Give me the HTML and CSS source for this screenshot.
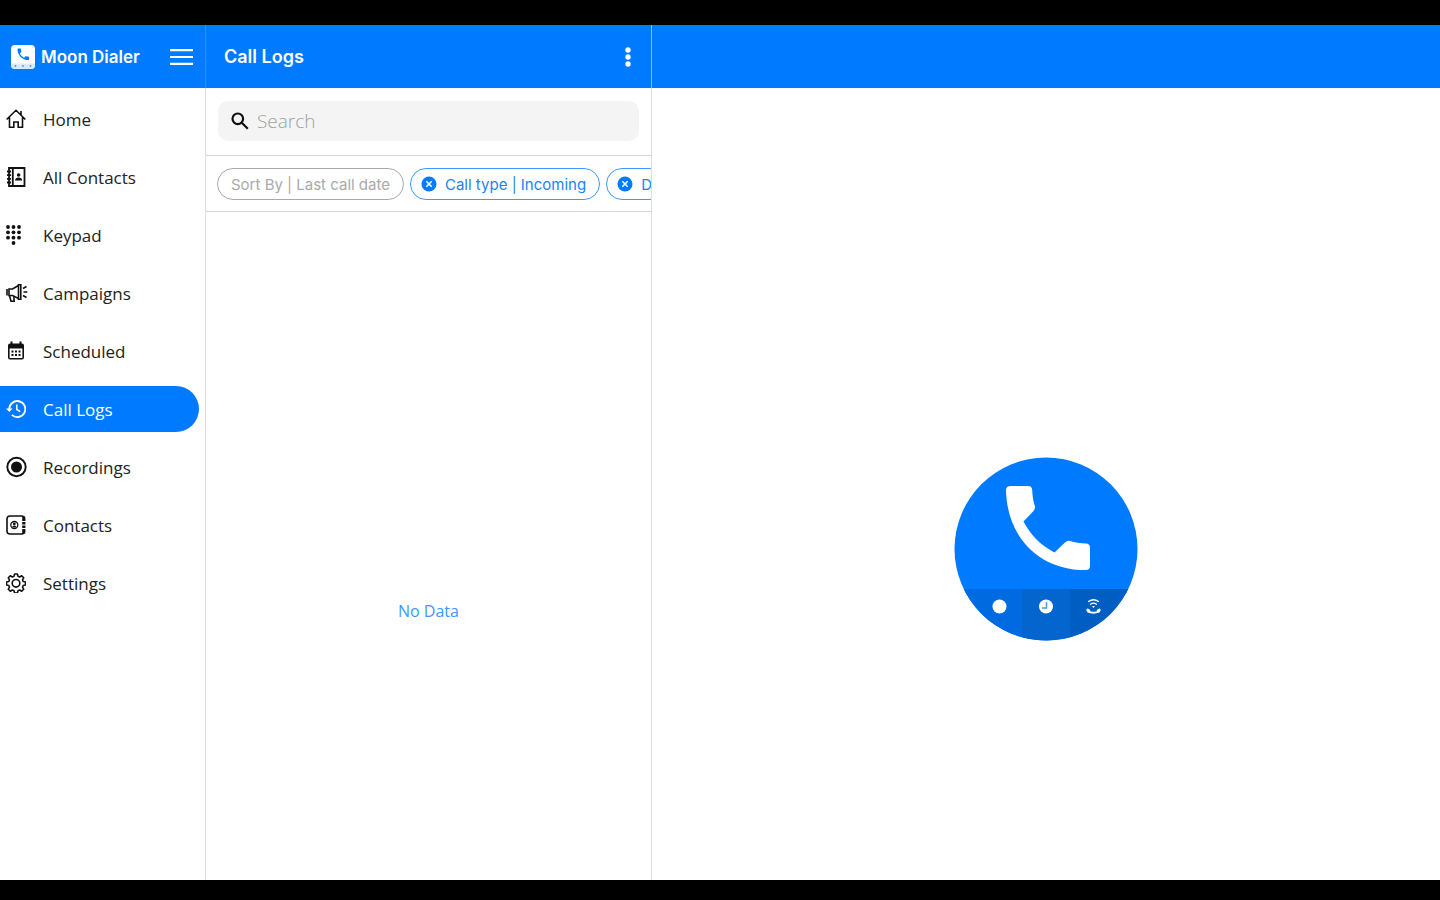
FILE: index.html
```html
<!doctype html>
<html lang="en">
<head>
    <meta charset="UTF-8">
    <meta name="viewport" content="width=device-width, initial-scale=1.0">
    <title>Moon Dialer</title>
    <link rel="stylesheet" href="styles.css">
</head>
<body>
<div class="app">
    <aside class="sidebar">
        <header class="bar brand">
            <svg class="brand-logo" viewBox="0 0 24 24">
                <rect width="24" height="24" rx="4" fill="#fff"/>
                <path d="M0 18.500h24V20a4 4 0 0 1-4 4H4a4 4 0 0 1-4-4z" fill="#d9eaff"/>
                <path transform="translate(4.6 1.6) scale(.64)" d="M6.62 10.79c1.44 2.83 3.76 5.14 6.59 6.59l2.2-2.2c.27-.27.67-.36 1.02-.24 1.12.37 2.33.57 3.57.57.55 0 1 .45 1 1V20c0 .55-.45 1-1 1C10.61 21 3 13.39 3 4c0-.55.45-1 1-1h3.5c.55 0 1 .45 1 1 0 1.25.2 2.45.57 3.57.11.35.03.74-.25 1.02z" fill="#007aff"/>
                <circle cx="4.500" cy="21" r=".9" fill="#3d98ff"/>
                <circle cx="12" cy="21" r=".9" fill="#3d98ff"/>
                <circle cx="19.500" cy="21" r=".9" fill="#3d98ff"/>
            </svg>
            <h1 class="brand-name">Moon Dialer</h1>
            <button class="icon-btn" type="button" aria-label="Menu">
                <svg width="23" height="16" viewBox="0 0 23 16" stroke="#fff" stroke-width="2.2">
                    <path d="M0 1.200h23M0 8h23M0 14.800h23"/>
                </svg>
            </button>
        </header>
        <nav class="nav">
            <a href="#home" class="nav-item">
                <svg class="nav-icon" viewBox="0 0 20 20" fill="none" stroke="currentColor" stroke-width="1.6">
                    <path d="M.6 10.500 10 1.300l9.400 9.200M15 6V2M3.500 8.500v9.700h4.300V13h4.400v5.200h4.300V8.500"/>
                </svg>
                Home
            </a>
            <a href="#all-contacts" class="nav-item">
                <svg class="nav-icon" viewBox="0 0 20 20" fill="none" stroke="currentColor" stroke-width="1.8">
                    <path d="M3 1h15.500v18H3zM6.800 1v18"/>
                    <path d="M1 4.500h4M1 8.200h4M1 11.800h4M1 15.500h4"/>
                    <circle cx="12.600" cy="8" r="1.800" fill="currentColor" stroke="none"/>
                    <path d="M9 13.500c0-4 7.200-4 7.200 0z" fill="currentColor" stroke="none"/>
                </svg>
                All Contacts
            </a>
            <a href="#keypad" class="nav-item">
                <svg class="nav-icon" viewBox="0 0 20 20" fill="currentColor">
                    <circle cx="2" cy="2" r="1.900"/><circle cx="7.500" cy="2" r="1.900"/><circle cx="13" cy="2" r="1.900"/>
                    <circle cx="2" cy="7.300" r="1.900"/><circle cx="7.500" cy="7.300" r="1.900"/><circle cx="13" cy="7.300" r="1.900"/>
                    <circle cx="2" cy="12.700" r="1.900"/><circle cx="7.500" cy="12.700" r="1.900"/><circle cx="13" cy="12.700" r="1.900"/>
                    <circle cx="7.500" cy="18" r="1.900"/>
                </svg>
                Keypad
            </a>
            <a href="#campaigns" class="nav-item">
                <svg class="nav-icon" viewBox="0 0 20 20" fill="none" stroke="currentColor" stroke-width="1.6" overflow="visible">
                    <path d="M1 6v6.500M3 6v6.500h3.500l6 3V2.500L6.500 6z"/>
                    <path d="M12.500 2.500V1.700h2.300v14.600h-2.300v-.8M3.500 12.500 5 18.300h3.200l-.4-4.800"/>
                    <path d="M17 5.500 20.500 3.500M17.500 9h3.800M17 12.500l3.500 2"/>
                </svg>
                Campaigns
            </a>
            <a href="#scheduled" class="nav-item">
                <svg class="nav-icon" viewBox="0 0 20 20">
                    <path d="M4 2.500h12a2 2 0 0 1 2 2v12a2 2 0 0 1-2 2H4a2 2 0 0 1-2-2v-12a2 2 0 0 1 2-2z" fill="currentColor"/>
                    <path d="M5.500.5v4M14.500.5v4" stroke="currentColor" stroke-width="2"/>
                    <path d="M3.600 7.500h12.800V17H3.600z" fill="#fff"/>
                    <path d="M5.500 10.500h9M5.500 14h9" stroke="currentColor" stroke-width="2" stroke-dasharray="2 1.500"/>
                </svg>
                Scheduled
            </a>
            <a href="#call-logs" class="nav-item active">
                <svg class="nav-icon" viewBox="0 0 20 20" fill="none" stroke="currentColor" stroke-width="1.9">
                    <path d="M3.300 10.500A8 8 0 1 1 5.800 15.900"/>
                    <path d="M0 9.500h6.600l-3.300 3.600z" fill="currentColor" stroke="none"/>
                    <path d="M10.800 5.500v5l3.500 2.200" stroke-width="1.500"/>
                </svg>
                Call Logs
            </a>
            <a href="#recordings" class="nav-item">
                <svg class="nav-icon" viewBox="0 0 20 20" overflow="visible">
                    <circle cx="10.500" cy="10" r="9.200" fill="none" stroke="currentColor" stroke-width="1.900"/>
                    <circle cx="10.500" cy="10" r="5.500" fill="currentColor"/>
                </svg>
                Recordings
            </a>
            <a href="#contacts" class="nav-item">
                <svg class="nav-icon" viewBox="0 0 20 20" fill="none" stroke="currentColor" stroke-width="1.6">
                    <rect x="1" y="1" width="17.500" height="18" rx="3"/>
                    <path d="M17.700 1.500v17" stroke-width="3"/>
                    <path d="M16 6.500h4M16 10h4M16 13.500h4" stroke="#fff" stroke-width="1"/>
                    <circle cx="8.300" cy="10" r="3.500" stroke-width="1.300"/>
                    <circle cx="8.300" cy="9" r="1.400" fill="currentColor" stroke="none"/>
                    <path d="M6 12.500c0-2.500 4.600-2.500 4.600 0z" fill="currentColor" stroke="none"/>
                </svg>
                Contacts
            </a>
            <a href="#settings" class="nav-item">
                <svg class="nav-icon" viewBox="0 0 20 20" fill="none" stroke="currentColor" stroke-width="1.6" stroke-linejoin="round">
                    <path d="M8.600 1h2.800l.6 2.300 1.700.7 2-1.200 2 2-1.200 2 .7 1.700 2.300.6v2.800l-2.300.6-.7 1.700 1.200 2-2 2-2-1.200-1.700.7-.6 2.300H8.600L8 17.700 6.300 17l-2 1.200-2-2 1.200-2-.7-1.700-2.300-.6V9.100l2.300-.6.7-1.700-1.200-2 2-2 2 1.200L8 3.300z"/>
                    <circle cx="10" cy="10.300" r="3.800"/>
                </svg>
                Settings
            </a>
        </nav>
    </aside>

    <section class="logs">
        <header class="bar logs-bar">
            <h2 class="bar-title">Call Logs</h2>
            <button class="icon-btn" type="button" aria-label="More options">
                <svg width="6" height="20" viewBox="0 0 6 20" fill="#fff">
                    <circle cx="3" cy="3" r="2.700"/>
                    <circle cx="3" cy="10" r="2.700"/>
                    <circle cx="3" cy="17" r="2.700"/>
                </svg>
            </button>
        </header>
        <div class="search-row">
            <label class="search">
                <svg width="18" height="18" viewBox="0 0 18 18" fill="none" stroke="#111" stroke-width="2.2">
                    <circle cx="6.800" cy="6.800" r="5.300"/>
                    <path d="M10.500 10.500l6.300 6.300"/>
                </svg>
                <input class="search-input" type="search" placeholder="Search" aria-label="Search">
            </label>
        </div>
        <div class="chips">
            <button class="chip chip-sort" type="button">Sort By | Last call date</button>
            <button class="chip chip-filter" type="button">
                <svg class="chip-x" viewBox="0 0 16 16">
                    <circle cx="8" cy="8" r="7.500" fill="#007aff"/>
                    <path d="M5.300 5.300l5.400 5.400M10.700 5.300l-5.400 5.400" stroke="#fff" stroke-width="1.500"/>
                </svg>
                Call type | Incoming
            </button>
            <button class="chip chip-filter" type="button">
                <svg class="chip-x" viewBox="0 0 16 16">
                    <circle cx="8" cy="8" r="7.500" fill="#007aff"/>
                    <path d="M5.300 5.300l5.400 5.400M10.700 5.300l-5.400 5.400" stroke="#fff" stroke-width="1.500"/>
                </svg>
                D
            </button>
        </div>
        <div class="empty">No Data</div>
    </section>

    <main class="detail">
        <div class="bar"></div>
        <div class="empty">
            <svg class="logo" viewBox="0 0 184 184">
                <clipPath id="disc"><circle cx="92" cy="92" r="91.500"/></clipPath>
                <g clip-path="url(#disc)">
                    <path fill="#007aff" d="M0 0h184v184H0z"/>
                    <path fill="#006be0" d="M0 132h68v52H0z"/>
                    <path fill="#0565cf" d="M68 132h48v52H68z"/>
                    <path fill="#005dc2" d="M116 132h68v52h-68z"/>
                </g>
                <path fill="#fff" d="M57 29h17q4 0 4.200 4c.3 6.500 1 11 2.500 15.500q1 3-1.200 5.500L69.500 64.500c8 14.500 17 23.500 31 31l10.500-10q2-2.200 5-1.500c5 1.500 10 2.200 16 2.500q4 .2 4 4.200v18.300q0 4-4 4C86 113.500 53 81 52 33q0-4 5-4z"/>
                <circle cx="45.500" cy="149.500" r="7" fill="#fff"/>
                <circle cx="92" cy="149.500" r="7" fill="#fff"/>
                <path d="M92.500 145v6h-4.500" fill="none" stroke="#4d9bed" stroke-width="1.500"/>
                <g fill="none" stroke="#fff" stroke-linecap="round">
                    <path d="M134.500 144.500q5-3.500 10 0M136.500 147.200q3-2 6 0" stroke-width="1.300"/>
                    <path d="M134 154.500q5.500 2.500 11 0" stroke-width="1.800"/>
                    <path d="M133.800 153.200l1 .8M145.200 153.200l-1 .8" stroke-width="3"/>
                </g>
                <path d="M138 149h3l-1.500 2z" fill="#fff"/>
            </svg>
        </div>
    </main>
</div>
</body>
</html>
```

FILE: styles.css
```css
* {
    box-sizing: border-box;
}

html, body {
    margin: 0;
    padding: 0;
}

body {
    background: #000;
    font-family: "Open Sans", "Noto Sans", sans-serif;
    color: #222;
}

button {
    margin: 0;
    cursor: pointer;
}

.app {
    display: flex;
    min-height: 100vh;
    background: #fff;
    border: 0 solid #000;
    border-width: 25px 0 20px;
}

/* top bars */
.bar {
    display: flex;
    align-items: center;
    height: 63px;
    background: #007aff;
    color: #fff;
    font-family: Inter, "Liberation Sans", sans-serif;
}

.brand {
    padding: 0 12px 0 11px;
    border-right: 1px solid #338fff;
}

.brand-logo {
    width: 24px;
    height: 24px;
    margin-right: 6px;
}

.brand-name, .bar-title {
    flex: 1;
    margin: 0;
    font-size: 18px;
    line-height: 24px;
    font-weight: 600;
    white-space: nowrap;
}

.brand-name {
    font-size: 17px;
}

.icon-btn {
    display: flex;
    padding: 0;
    border: 0;
    background: none;
}

/* left menu */
.sidebar {
    display: flex;
    flex-direction: column;
    flex: none;
    width: 206px;
}

.nav {
    display: flex;
    flex-direction: column;
    flex: 1;
    gap: 12px;
    padding: 8px 6px 0 0;
    border-right: 1px solid #ddd;
}

.nav-item {
    display: flex;
    align-items: center;
    gap: 17px;
    height: 46px;
    padding-left: 6px;
    border-radius: 0 23px 23px 0;
    color: #222;
    font-size: 17px;
    text-decoration: none;
}

.nav-icon {
    width: 20px;
    height: 20px;
    color: #111;
}

.nav-item.active {
    background: #007aff;
    color: #fff;
}

.nav-item.active .nav-icon {
    color: #fff;
}

/* call list */
.logs {
    display: flex;
    flex-direction: column;
    flex: none;
    width: 446px;
}

.logs-bar {
    padding: 0 20px 0 18px;
    border-right: 1px solid #80bcff;
}

.search-row {
    padding: 13px 12px 14px;
    border-right: 1px solid #ddd;
    border-bottom: 1px solid #d4d4d4;
}

.search {
    display: flex;
    align-items: center;
    gap: 8px;
    height: 40px;
    padding: 0 13px;
    border-radius: 10px;
    background: #f4f4f4;
}

.search-input {
    flex: 1;
    min-width: 0;
    padding: 0;
    border: 0;
    outline: 0;
    background: none;
    font-family: inherit;
    font-size: 19px;
    font-weight: 300;
}

.search-input::placeholder {
    color: #a0a0a0;
}

.chips {
    display: flex;
    gap: 6px;
    padding: 12px 0 11px 11px;
    overflow: hidden;
    border-right: 1px solid #ddd;
    border-bottom: 1px solid #d4d4d4;
}

.chip {
    display: flex;
    flex: none;
    align-items: center;
    gap: 8px;
    height: 32px;
    padding: 0 13px;
    border: 1px solid #3d98ff;
    border-radius: 16px;
    background: #fff;
    color: #1a84f5;
    font-family: Inter, "Liberation Sans", sans-serif;
    font-size: 15px;
    white-space: nowrap;
}

.chip-sort {
    border-color: #aaa;
    color: #aaa;
}

.chip-filter {
    padding: 0 13px 0 10px;
}

.chip-x {
    width: 16px;
    height: 16px;
}

.empty {
    display: flex;
    flex: 1;
    align-items: center;
    justify-content: center;
    padding-top: 130px;
    color: #3d98ff;
    font-size: 16px;
}

.logs .empty {
    border-right: 1px solid #ddd;
}

/* right pane */
.detail {
    display: flex;
    flex-direction: column;
    flex: 1;
    min-width: 0;
}

.logo {
    width: 184px;
    height: 184px;
}
```
